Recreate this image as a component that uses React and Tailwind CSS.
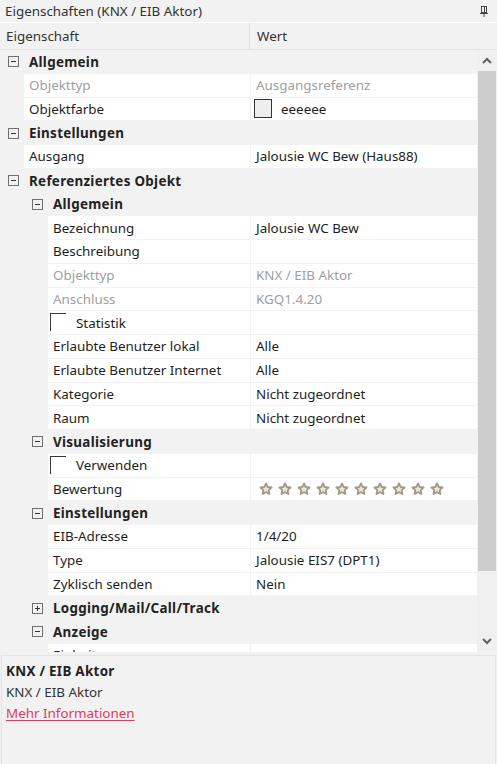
import React from 'react';

const rows = [
  { kind: 'group', level: 0, label: 'Allgemein' },
  { kind: 'leaf', level: 1, name: 'Objekttyp', value: 'Ausgangsreferenz', disabled: true },
  { kind: 'leaf', level: 1, name: 'Objektfarbe', swatch: 'eeeeee' },
  { kind: 'group', level: 0, label: 'Einstellungen' },
  { kind: 'leaf', level: 1, name: 'Ausgang', value: 'Jalousie WC Bew (Haus88)' },
  { kind: 'group', level: 0, label: 'Referenziertes Objekt' },
  { kind: 'group', level: 1, label: 'Allgemein' },
  { kind: 'leaf', level: 2, name: 'Bezeichnung', value: 'Jalousie WC Bew' },
  { kind: 'leaf', level: 2, name: 'Beschreibung', value: '' },
  { kind: 'leaf', level: 2, name: 'Objekttyp', value: 'KNX / EIB Aktor', disabled: true },
  { kind: 'leaf', level: 2, name: 'Anschluss', value: 'KGQ1.4.20', disabled: true },
  { kind: 'leaf', level: 2, name: 'Statistik', check: true },
  { kind: 'leaf', level: 2, name: 'Erlaubte Benutzer lokal', value: 'Alle' },
  { kind: 'leaf', level: 2, name: 'Erlaubte Benutzer Internet', value: 'Alle' },
  { kind: 'leaf', level: 2, name: 'Kategorie', value: 'Nicht zugeordnet' },
  { kind: 'leaf', level: 2, name: 'Raum', value: 'Nicht zugeordnet' },
  { kind: 'group', level: 1, label: 'Visualisierung' },
  { kind: 'leaf', level: 2, name: 'Verwenden', check: true },
  { kind: 'leaf', level: 2, name: 'Bewertung', stars: 10 },
  { kind: 'group', level: 1, label: 'Einstellungen' },
  { kind: 'leaf', level: 2, name: 'EIB-Adresse', value: '1/4/20' },
  { kind: 'leaf', level: 2, name: 'Type', value: 'Jalousie EIS7 (DPT1)' },
  { kind: 'leaf', level: 2, name: 'Zyklisch senden', value: 'Nein' },
  { kind: 'group', level: 1, label: 'Logging/Mail/Call/Track', collapsed: true },
  { kind: 'group', level: 1, label: 'Anzeige' },
  { kind: 'leaf', level: 2, name: 'Einheit', value: '' },
];

const Expander = ({ collapsed }) => (
  <svg width="11" height="11" viewBox="0 0 11 11" className="shrink-0">
    <rect x="0.5" y="0.5" width="10" height="10" fill="none" stroke="#6f6f6f" />
    <line x1="3" y1="5.5" x2="8" y2="5.5" stroke="#333" />
    {collapsed && <line x1="5.5" y1="3" x2="5.5" y2="8" stroke="#333" />}
  </svg>
);

const Star = () => (
  <svg width="14" height="14" viewBox="0 0 24 24" className="shrink-0">
    <path
      d="M12 2.5l2.9 6.1 6.6.8-4.9 4.6 1.3 6.6L12 17.3l-5.9 3.3 1.3-6.6-4.9-4.6 6.6-.8z"
      fill="#ece8dc"
      stroke="#a39c88"
      strokeWidth="3.2"
      strokeLinejoin="round"
    />
  </svg>
);

const GroupRow = ({ row }) => (
  <div className="h-[23.75px] flex items-center shrink-0">
    <div className={row.level === 0 ? 'w-[29px] pl-[8px] flex' : 'w-[53px] pl-[32px] flex'}>
      <Expander collapsed={row.collapsed} />
    </div>
    <span className="font-bold text-[#222] tracking-[0.3px]">{row.label}</span>
  </div>
);

const LeafRow = ({ row }) => {
  const indent = row.level === 1 ? 'w-[24px]' : 'w-[48px]';
  const color = row.disabled ? 'text-[#a0a0a0]' : 'text-[#1e1e1e]';
  return (
    <div className="h-[23.75px] flex shrink-0 pb-px">
      <div className={`${indent} shrink-0`} />
      <div className={`flex-1 flex items-center bg-white pl-[5px] overflow-hidden whitespace-nowrap ${color}`}>
        {row.check ? (
          <>
            <div className="w-[16px] h-[18px] border-l border-t border-[#3a3a3a] self-start mt-[2px] -ml-[3px] shrink-0" />
            <span className="ml-[10px]">{row.name}</span>
          </>
        ) : (
          row.name
        )}
      </div>
      <div className="w-px shrink-0" />
      <div className={`w-[226px] shrink-0 flex items-center bg-white pl-[5px] overflow-hidden whitespace-nowrap ${color}`}>
        {row.swatch ? (
          <>
            <div className="w-[18px] h-[19px] border border-[#333] bg-[#eeeeee] -ml-[2px] shrink-0" />
            <span className="ml-[9px]">{row.swatch}</span>
          </>
        ) : row.stars ? (
          <div className="flex gap-[5px] pl-[3px]">
            {Array.from({ length: row.stars }).map((_, i) => (
              <Star key={i} />
            ))}
          </div>
        ) : (
          row.value
        )}
      </div>
    </div>
  );
};

const Chevron = ({ up }) => (
  <svg width="10" height="7" viewBox="0 0 10 7">
    <path
      d={up ? 'M1 6L5 2l4 4' : 'M1 1l4 4 4-4'}
      fill="none"
      stroke="#606060"
      strokeWidth="2"
    />
  </svg>
);

export default function App() {
  return (
    <div
      className="w-[497px] h-[764px] bg-[#f2f2f2] flex flex-col overflow-hidden text-[13.4px] text-[#1e1e1e]"
      style={{ fontFamily: '"Noto Sans", "Open Sans", sans-serif' }}
    >
      {/* title bar */}
      <div className="h-[23px] shrink-0 flex items-center justify-between pl-[5px] pr-[9px] border-b border-white text-[#333]">
        <span>Eigenschaften (KNX / EIB Aktor)</span>
        <svg width="8" height="11" viewBox="0 0 8 11">
          <rect x="1.5" y="0.5" width="5" height="6" fill="none" stroke="#444" />
          <line x1="4.5" y1="1" x2="4.5" y2="6" stroke="#444" />
          <line x1="0" y1="7.5" x2="8" y2="7.5" stroke="#444" />
          <line x1="4" y1="8" x2="4" y2="11" stroke="#444" />
        </svg>
      </div>

      {/* column header */}
      <div className="h-[27px] shrink-0 flex items-center border-b border-[#e2e2e2] text-[#333]">
        <div className="w-[250px] pl-[6px] border-r border-[#e0e0e0] h-full flex items-center">Eigenschaft</div>
        <div className="pl-[7px]">Wert</div>
      </div>

      {/* grid */}
      <div className="h-[602px] shrink-0 flex">
        <div className="w-[477px] flex flex-col overflow-hidden">
          {rows.map((row, i) =>
            row.kind === 'group' ? <GroupRow key={i} row={row} /> : <LeafRow key={i} row={row} />
          )}
        </div>
        <div className="w-[20px] flex flex-col bg-[#f0f0f0]">
          <div className="h-[21px] flex items-center justify-center">
            <Chevron up />
          </div>
          <div className="h-[500px] bg-[#cdcdcd] mx-px" />
          <div className="flex-1" />
          <div className="h-[22px] flex items-center justify-center">
            <Chevron />
          </div>
        </div>
      </div>

      {/* description */}
      <div className="flex-1 mt-[3px] mx-px border border-[#e4e4e4] border-b-0 bg-[#f2f2f2] px-[4px] pt-[5px] flex flex-col leading-[21px]">
        <span className="font-bold text-[#222] tracking-[0.3px]">KNX / EIB Aktor</span>
        <span className="text-[#333]">KNX / EIB Aktor</span>
        <a href="#" className="text-[#e8385a] underline underline-offset-2 w-fit">Mehr Informationen</a>
      </div>
    </div>
  );
}
